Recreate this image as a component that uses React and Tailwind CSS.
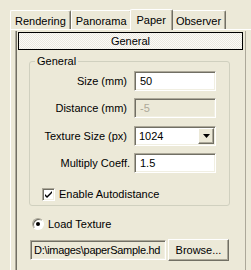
const sunken = 'border border-t-[#aca899] border-l-[#aca899] border-b-white border-r-white shadow-[inset_1px_1px_0_#716f64,inset_-1px_-1px_0_#f1efe2]';
const raised = 'border border-t-white border-l-white border-b-[#716f64] border-r-[#716f64] shadow-[inset_-1px_-1px_0_#aca899]';

function Tab({ label, active }) {
  if (active) {
    return (
      <div className="relative z-10 -mx-[2px] -mb-px h-[21px] px-[6px] pt-[2px] bg-[#ece9d8] border-t border-l border-t-white border-l-white border-r border-r-[#716f64] shadow-[inset_-1px_0_0_#aca899] rounded-t-[2px] leading-[16px]">
        {label}
      </div>
    );
  }
  return (
    <div className="h-[19px] px-[4px] pt-[2px] bg-[#ece9d8] border-t border-l border-t-white border-l-white border-r border-r-[#716f64] shadow-[inset_-1px_0_0_#aca899] rounded-t-[2px] leading-[16px]">
      {label}
    </div>
  );
}

function Row({ label, children, pr = 'pr-[7px]', mt }) {
  return (
    <div className={`flex items-center ${mt}`}>
      <div className={`w-[104px] text-right ${pr}`}>{label}</div>
      {children}
    </div>
  );
}

export default function App() {
  return (
    <div className="w-[251px] h-[270px] overflow-hidden bg-[#ece9d8] text-[11px] text-black font-['Liberation_Sans',Arial,sans-serif]">
      <div className="flex items-end pl-[10px] pt-[8px] h-[29px]">
        <Tab label="Rendering" />
        <Tab label="Panorama" />
        <Tab label="Paper" active />
        <Tab label="Observer" />
      </div>
      <div className="ml-[10px] w-[250px] h-[241px] border-t border-l border-t-white border-l-white pl-[4px] pt-px">
        <div className="w-[231px] h-[240px] border-l border-r border-l-[#aca899] border-r-[#aca899] shadow-[inset_1px_0_0_#716f64] pl-[2px] pt-px">
          <div className="w-[225px] h-[18px] border border-black bg-[repeating-conic-gradient(#fbfaf7_0_25%,#ebe9e0_0_50%)] bg-[length:2px_2px] text-center leading-[16px]">General</div>

          <fieldset className="ml-[11px] mt-[5px] w-[201px] h-[151px] border border-[#d0d0bf] rounded-[3px] px-0">
            <legend className="ml-[5px] px-[2px] leading-[13px]">General</legend>
            <Row label="Size (mm)" mt="mt-[3px]">
              <div className={`w-[82px] h-[20px] bg-white pl-[5px] leading-[18px] ${sunken}`}>50</div>
            </Row>
            <Row label="Distance (mm)" mt="mt-[7px]">
              <div className={`w-[82px] h-[20px] bg-[#ece9d8] pl-[5px] leading-[18px] text-[#aca899] ${sunken}`}>-5</div>
            </Row>
            <Row label="Texture Size (px)" mt="mt-[8px]">
              <div className={`w-[82px] h-[20px] bg-white flex items-center ${sunken}`}>
                <span className="flex-1 pl-[4px] leading-[18px]">1024</span>
                <div className={`w-[16px] h-[16px] mr-px bg-[#ece9d8] flex items-center justify-center ${raised}`}>
                  <svg width="7" height="4" viewBox="0 0 7 4"><path d="M0 0h7L3.5 4z" fill="#000" /></svg>
                </div>
              </div>
            </Row>
            <Row label="Multiply Coeff." pr="pr-[4px]" mt="mt-[7px]">
              <div className={`w-[82px] h-[20px] bg-white pl-[5px] leading-[18px] ${sunken}`}>1.5</div>
            </Row>
            <div className="flex items-center ml-[12px] mt-[13px]">
              <div className={`w-[13px] h-[13px] bg-white flex items-center justify-center ${sunken}`}>
                <svg width="9" height="9" viewBox="0 0 9 9"><path d="M1 4l2 2 5-5v2l-5 5-2-2z" fill="#000" /></svg>
              </div>
              <span className="ml-[4px]">Enable Autodistance</span>
            </div>
          </fieldset>

          <div className="flex items-center ml-[14px] mt-[10px]">
            <div className="w-[12px] h-[12px] rounded-full bg-white border border-t-[#aca899] border-l-[#aca899] border-b-white border-r-white shadow-[inset_1px_1px_0_#716f64] flex items-center justify-center">
              <div className="w-[4px] h-[4px] rounded-full bg-black" />
            </div>
            <span className="ml-[4px]">Load Texture</span>
          </div>
          <div className="flex items-center ml-[12px] mt-[6px]">
            <div className={`w-[136px] h-[20px] bg-[#ece9d8] pl-[3px] leading-[18px] tracking-[-0.3px] whitespace-nowrap overflow-hidden ${sunken}`}>D:\images\paperSample.hd</div>
            <div className={`ml-[2px] w-[61px] h-[22px] bg-[#ece9d8] text-center leading-[20px] ${raised}`}>Browse...</div>
          </div>
        </div>
      </div>
    </div>
  );
}
